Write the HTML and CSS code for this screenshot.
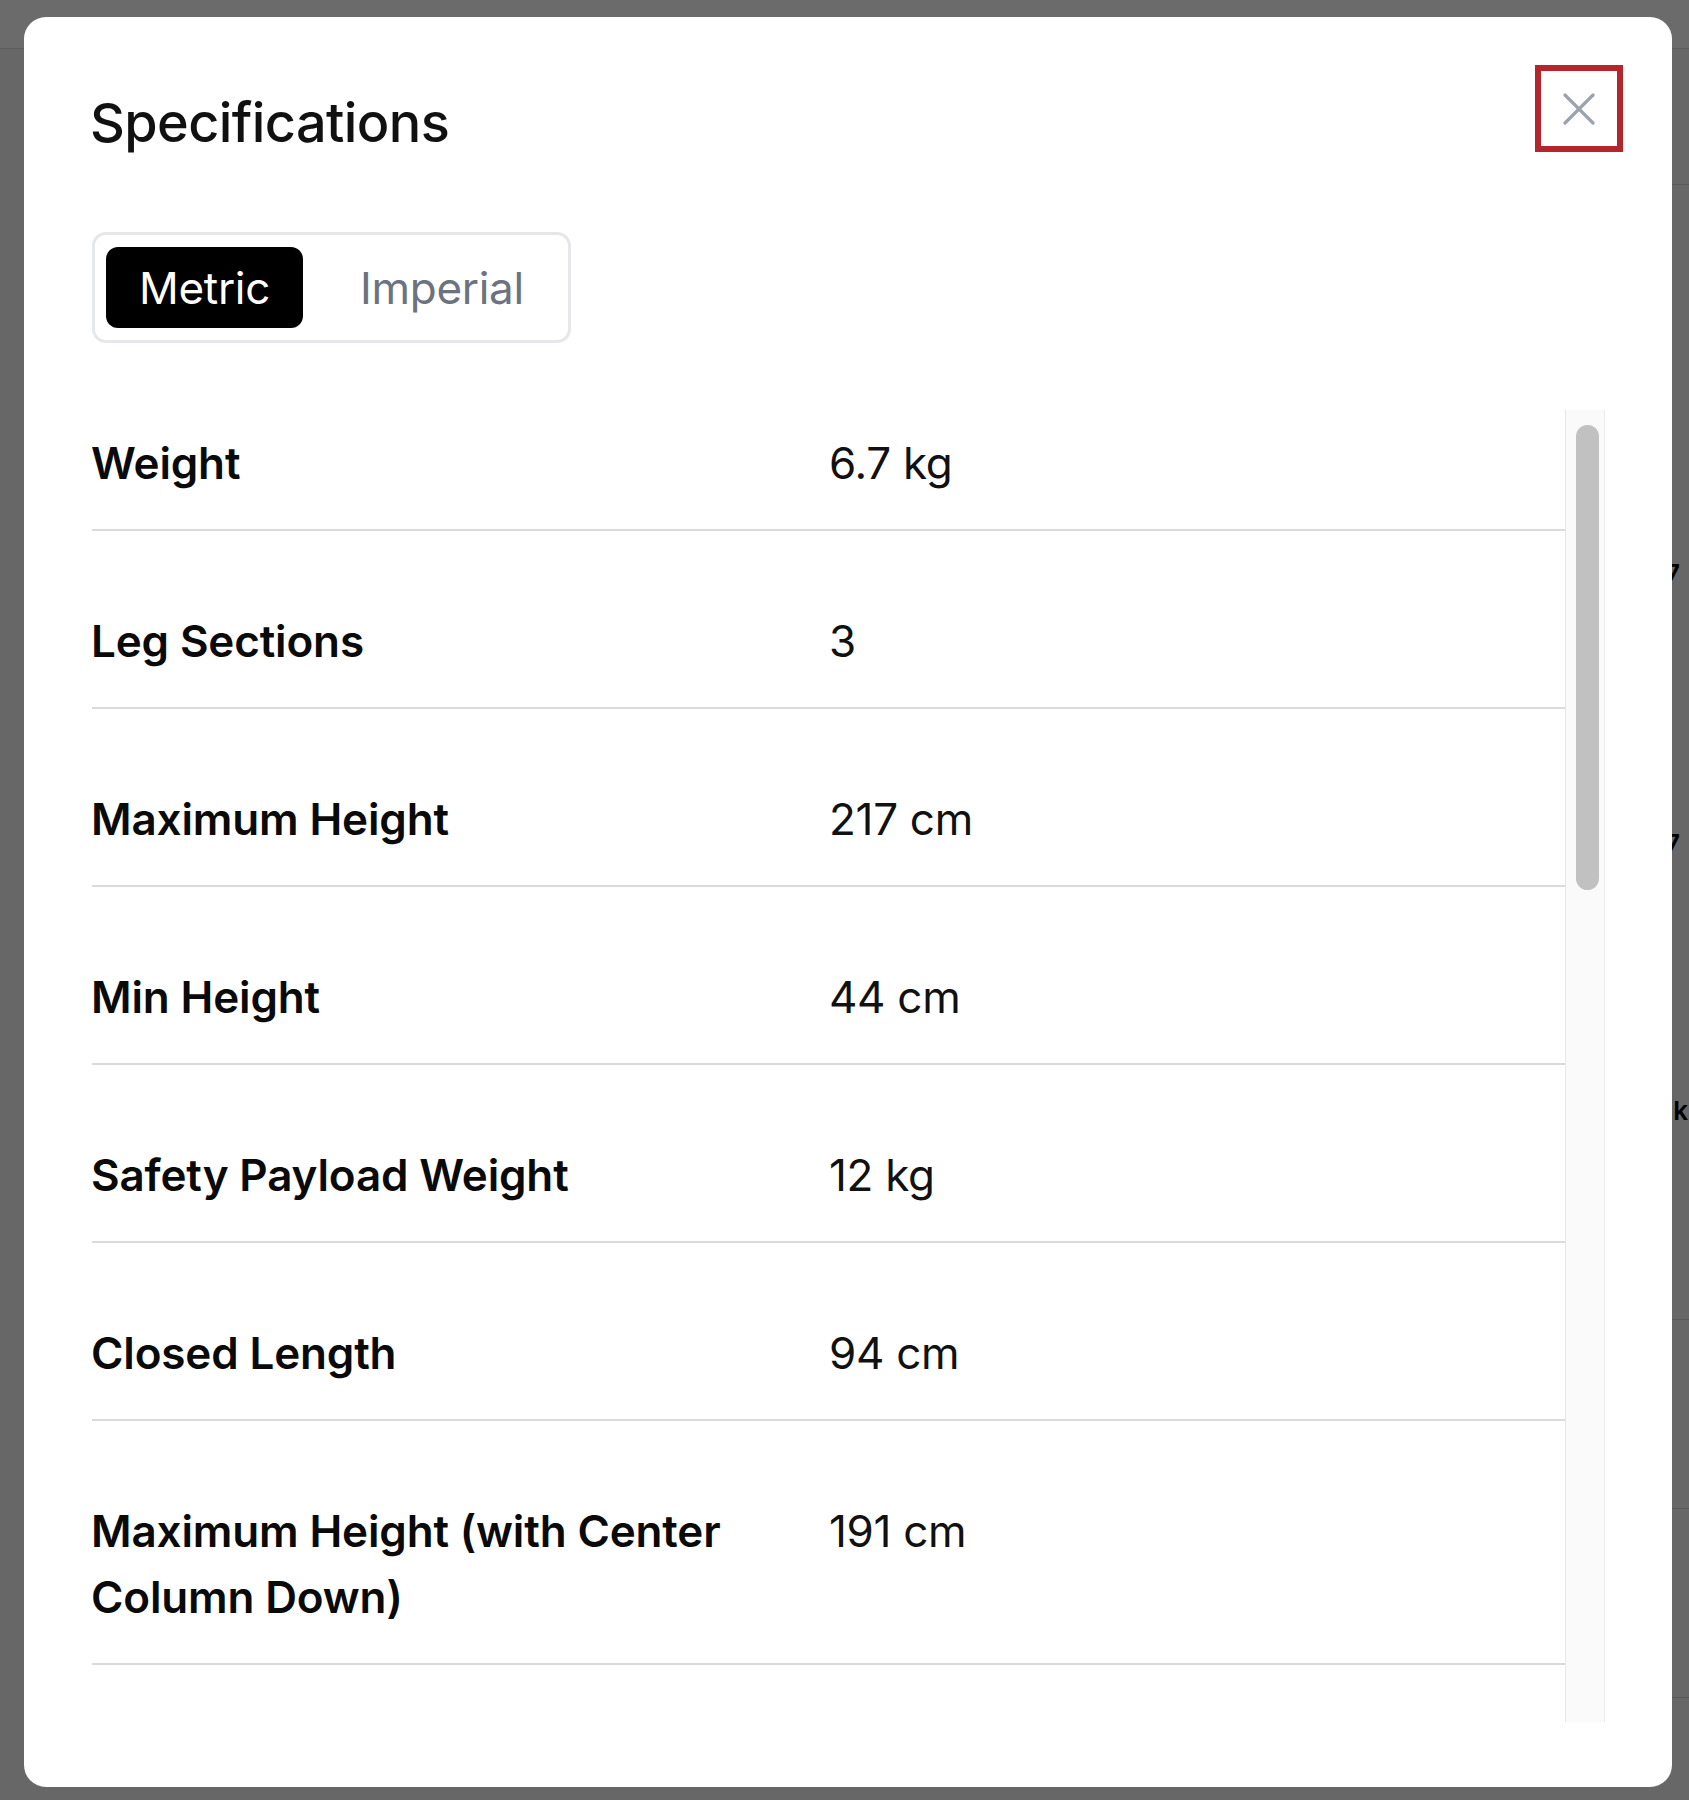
FILE: index.html
```html
<!DOCTYPE html>
<html lang="en">
<head>
    <meta charset="UTF-8">
    <meta name="viewport" content="width=device-width, initial-scale=1.0">
    <title>Specifications</title>
    <link rel="stylesheet" href="styles.css">
</head>
<body>
    <!-- Seite im Hintergrund -->
    <div class="page">
        <header class="page-header"></header>
        <div class="page-body">
            <div class="bg-rule"></div>
            <span class="bg-value bg-value-first">6.7</span>
            <span class="bg-value">217</span>
            <span class="bg-value bg-value-cut">k</span>
            <div class="bg-rule bg-rule-low"></div>
            <div class="bg-rule"></div>
            <div class="bg-rule"></div>
        </div>
    </div>

    <!-- Dialog -->
    <div class="overlay">
        <div class="modal" role="dialog" aria-labelledby="spec-title">
            <div class="modal-header">
                <h2 class="modal-title" id="spec-title">Specifications</h2>
                <button class="close-btn" aria-label="Close">
                    <svg viewBox="0 0 32 32" fill="none" stroke="#9ca3af" stroke-width="3.2" stroke-linecap="round">
                        <line x1="2" y1="2" x2="30" y2="30"/>
                        <line x1="30" y1="2" x2="2" y2="30"/>
                    </svg>
                </button>
            </div>

            <div class="unit-toggle">
                <button class="unit-btn active">Metric</button>
                <button class="unit-btn">Imperial</button>
            </div>

            <div class="spec-scroll">
                <dl class="spec-list">
                    <div class="spec-row"><dt>Weight</dt><dd>6.7 kg</dd></div>
                    <div class="spec-row"><dt>Leg Sections</dt><dd>3</dd></div>
                    <div class="spec-row"><dt>Maximum Height</dt><dd>217 cm</dd></div>
                    <div class="spec-row"><dt>Min Height</dt><dd>44 cm</dd></div>
                    <div class="spec-row"><dt>Safety Payload Weight</dt><dd>12 kg</dd></div>
                    <div class="spec-row"><dt>Closed Length</dt><dd>94 cm</dd></div>
                    <div class="spec-row"><dt>Maximum Height (with Center Column Down)</dt><dd>191 cm</dd></div>
                </dl>
                <div class="scroll-track">
                    <div class="scroll-thumb"></div>
                </div>
            </div>
        </div>
    </div>
</body>
</html>
```

FILE: styles.css
```css
/* Grundlegende Stile */
*, *:before, *:after {
    box-sizing: border-box;
}
html, body {
    margin: 0;
    padding: 0;
    height: 100%;
    overflow: hidden;
    font-family: Inter, "Noto Sans", Arial, sans-serif;
    color: #111;
    background-color: #f5f5f5;
}

/* Hintergrundseite */
.page-header {
    height: 49px;
    background-color: #fff;
    border-bottom: 1px solid #dcdcdc;
}
.page-body {
    display: flex;
    flex-direction: column;
}
.bg-rule {
    height: 1px;
    margin-left: 1600px;
    margin-top: 188px;
    background-color: #d4d4d4;
}
.page-body .bg-rule:first-child {
    margin-top: 135px;
}
.bg-rule-low {
    margin-top: 193px;
}
.bg-value {
    margin-top: 240px;
    padding-right: 9px;
    font-size: 26px;
    line-height: 30px;
    font-weight: 600;
    text-align: right;
    color: #000;
}
.bg-value-first {
    margin-top: 374px;
}
.bg-value-cut {
    margin-top: 237px;
    padding-right: 1px;
}

/* Overlay + Dialog */
.overlay {
    position: fixed;
    inset: 0;
    display: flex;
    padding: 17px 17px 13px 24px;
    background-color: rgba(0, 0, 0, 0.58);
}
.modal {
    flex: 1;
    display: flex;
    flex-direction: column;
    padding: 48px 67px 65px 68px;
    background-color: #fff;
    border-radius: 22px;
}
.modal-header {
    display: flex;
    justify-content: space-between;
    align-items: flex-start;
}
.modal-title {
    margin: 27px 0 0 -2px;
    font-size: 54px;
    line-height: 62px;
    font-weight: 500;
    letter-spacing: -0.6px;
    color: #111;
}
.close-btn {
    width: 88px;
    height: 87px;
    margin-right: -18px;
    padding: 0;
    display: flex;
    align-items: center;
    justify-content: center;
    border: 6px solid #b5262c;
    background-color: #fff;
    cursor: pointer;
}
.close-btn svg {
    width: 32px;
    height: 32px;
}

/* Metric / Imperial Umschalter */
.unit-toggle {
    align-self: flex-start;
    display: flex;
    gap: 24px;
    margin-top: 78px;
    padding: 12px 11px;
    border: 3px solid #e5e7eb;
    border-radius: 14px;
}
.unit-btn {
    height: 81px;
    padding: 0 33px;
    border: 0;
    border-radius: 12px;
    background: transparent;
    font-family: inherit;
    font-size: 44px;
    font-weight: 400;
    letter-spacing: -0.3px;
    color: #6b7280;
    cursor: pointer;
}
.unit-btn.active {
    background-color: #000;
    color: #fff;
}

/* Spezifikationsliste */
.spec-scroll {
    flex: 1;
    min-height: 0;
    display: flex;
    margin-top: 67px;
}
.spec-list {
    flex: 1;
    margin: 0;
    overflow: hidden;
}
.spec-row {
    display: grid;
    grid-template-columns: 737px 1fr;
    padding: 77px 0 33px;
    border-bottom: 2px solid #dadada;
    font-size: 44px;
    line-height: 66px;
}
.spec-row:first-child {
    padding-top: 20px;
}
.spec-row dt {
    margin-left: -1px;
    padding-right: 40px;
    font-weight: 600;
    letter-spacing: -0.15px;
    color: #0a0a0a;
}
.spec-row dd {
    margin: 0;
    font-weight: 400;
    letter-spacing: -0.3px;
    color: #111;
}

/* Scrollbar */
.scroll-track {
    width: 40px;
    padding: 15px 5px 0 10px;
    background-color: #fafafa;
    border-left: 1px solid #e6e6e6;
    border-right: 1px solid #ececec;
}
.scroll-thumb {
    height: 465px;
    border-radius: 12px;
    background-color: #c1c1c1;
}
```
